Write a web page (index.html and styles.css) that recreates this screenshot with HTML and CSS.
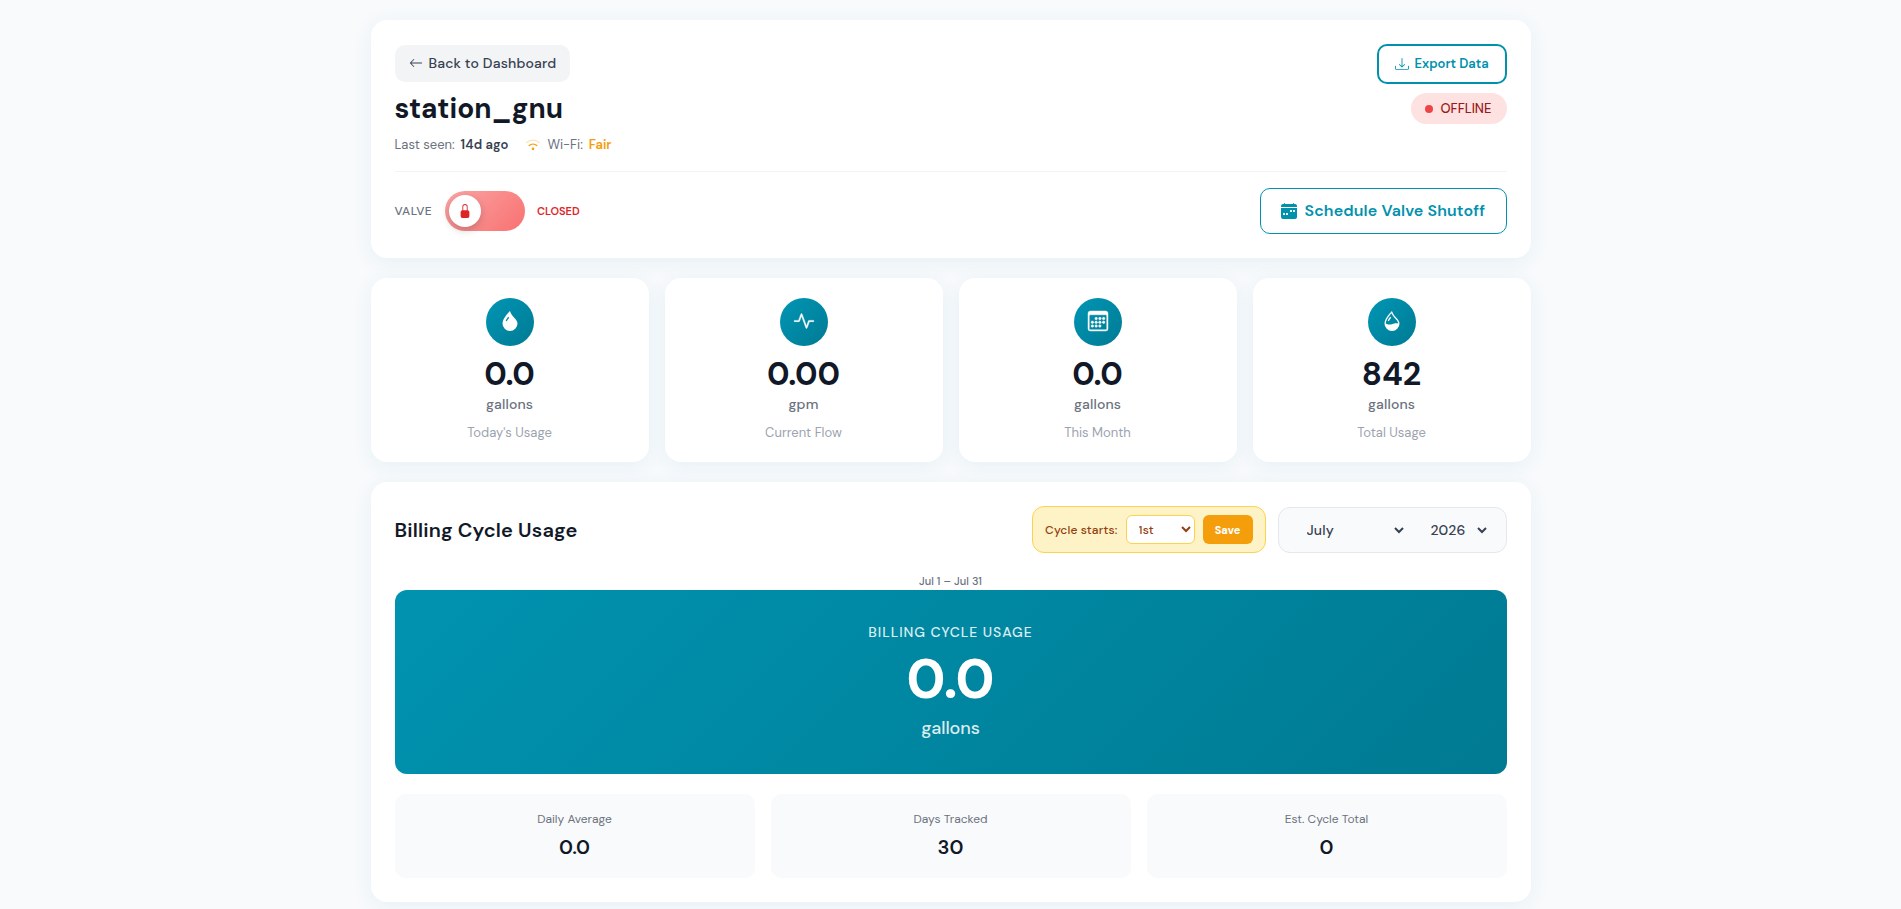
FILE: index.html
```
<!DOCTYPE html>
<html lang="en">
<head>
    <meta charset="UTF-8">
    <meta name="viewport" content="width=device-width, initial-scale=1.0">
    <title>station_gnu</title>
    <link rel="stylesheet" href="styles.css">
</head>
<body>
<div class="container">

    <!-- Station header -->
    <section class="card header-card">
        <div class="header-top">
            <button class="btn-back">
                <svg class="icon" viewBox="0 0 16 16"><path d="M15 8a.5.5 0 0 0-.5-.5H2.707l3.147-3.146a.5.5 0 1 0-.708-.708l-4 4a.5.5 0 0 0 0 .708l4 4a.5.5 0 0 0 .708-.708L2.707 8.5H14.5A.5.5 0 0 0 15 8"/></svg>
                <span>Back to Dashboard</span>
            </button>
            <button class="btn-export">
                <svg class="icon" viewBox="0 0 16 16"><path d="M.5 9.9a.5.5 0 0 1 .5.5v2.5a1 1 0 0 0 1 1h12a1 1 0 0 0 1-1v-2.5a.5.5 0 0 1 1 0v2.5a2 2 0 0 1-2 2H2a2 2 0 0 1-2-2v-2.5a.5.5 0 0 1 .5-.5"/><path d="M7.646 11.854a.5.5 0 0 0 .708 0l3-3a.5.5 0 0 0-.708-.708L8.5 10.293V1.5a.5.5 0 0 0-1 0v8.793L5.354 8.146a.5.5 0 1 0-.708.708z"/></svg>
                <span>Export Data</span>
            </button>
        </div>
        <div class="header-main">
            <div>
                <h1 class="station-name">station_gnu</h1>
                <div class="station-meta">
                    <span class="meta-item">Last seen: <strong class="seen">14d ago</strong></span>
                    <span class="meta-item wifi">
                        <svg class="icon wifi-icon" viewBox="0 0 16 16"><path class="wifi-off" d="M.8 5.4C4.8 1.5 11.2 1.5 15.2 5.4"/><path d="M3.6 8.6c2.5-2.3 6.3-2.3 8.8 0"/><circle cx="8" cy="12.4" r="1.5"/></svg>
                        <span>Wi-Fi:</span> <strong class="fair">Fair</strong>
                    </span>
                </div>
            </div>
            <div class="status-badge"><span class="status-dot"></span>OFFLINE</div>
        </div>
        <div class="valve-row">
            <div class="valve">
                <span class="valve-label">VALVE</span>
                <div class="toggle">
                    <div class="knob">
                        <svg class="icon" viewBox="0 0 16 16"><path d="M8 1a2 2 0 0 1 2 2v4H6V3a2 2 0 0 1 2-2m3 6V3a3 3 0 0 0-6 0v4a2 2 0 0 0-2 2v5a2 2 0 0 0 2 2h6a2 2 0 0 0 2-2V9a2 2 0 0 0-2-2"/></svg>
                    </div>
                </div>
                <span class="valve-state">CLOSED</span>
            </div>
            <button class="btn-schedule">
                <svg class="icon" viewBox="0 0 16 16"><path fill-rule="evenodd" d="M4 .5a.5.5 0 0 0-1 0V1H2a2 2 0 0 0-2 2v1h16V3a2 2 0 0 0-2-2h-1V.5a.5.5 0 0 0-1 0V1H4zM16 14V5H0v9a2 2 0 0 0 2 2h12a2 2 0 0 0 2-2M9.5 7h1a.5.5 0 0 1 .5.5v1a.5.5 0 0 1-.5.5h-1a.5.5 0 0 1-.5-.5v-1a.5.5 0 0 1 .5-.5m3 0h1a.5.5 0 0 1 .5.5v1a.5.5 0 0 1-.5.5h-1a.5.5 0 0 1-.5-.5v-1a.5.5 0 0 1 .5-.5M2 10.5a.5.5 0 0 1 .5-.5h1a.5.5 0 0 1 .5.5v1a.5.5 0 0 1-.5.5h-1a.5.5 0 0 1-.5-.5zm3.5-.5h1a.5.5 0 0 1 .5.5v1a.5.5 0 0 1-.5.5h-1a.5.5 0 0 1-.5-.5v-1a.5.5 0 0 1 .5-.5"/></svg>
                <span>Schedule Valve Shutoff</span>
            </button>
        </div>
    </section>

    <!-- Stats -->
    <section class="stats">
        <div class="card stat">
            <div class="stat-icon">
                <svg class="icon" viewBox="0 0 16 16"><path fill-rule="evenodd" d="M8 16a6 6 0 0 0 6-6c0-1.655-1.122-2.904-2.432-4.362C10.254 4.176 8.75 2.503 8 0c0 0-6 5.686-6 10a6 6 0 0 0 6 6M6.646 4.646l.708.708c-.29.29-1.128 1.311-1.907 2.87l-.894-.448c.82-1.641 1.717-2.753 2.093-3.13"/></svg>
            </div>
            <div class="stat-value">0.0</div>
            <div class="stat-unit">gallons</div>
            <div class="stat-label">Today's Usage</div>
        </div>
        <div class="card stat">
            <div class="stat-icon">
                <svg class="icon bold" viewBox="0 0 16 16"><path d="M6 2a.5.5 0 0 1 .47.33L10 12.036l1.53-4.208A.5.5 0 0 1 12 7.5h3.5a.5.5 0 0 1 0 1h-3.15l-1.88 5.17a.5.5 0 0 1-.94 0L6 3.964 4.47 8.171A.5.5 0 0 1 4 8.5H.5a.5.5 0 0 1 0-1h3.15l1.88-5.17A.5.5 0 0 1 6 2"/></svg>
            </div>
            <div class="stat-value">0.00</div>
            <div class="stat-unit">gpm</div>
            <div class="stat-label">Current Flow</div>
        </div>
        <div class="card stat">
            <div class="stat-icon">
                <svg class="icon bold" viewBox="0 0 16 16"><path fill-rule="evenodd" d="M14 0H2a2 2 0 0 0-2 2v12a2 2 0 0 0 2 2h12a2 2 0 0 0 2-2V2a2 2 0 0 0-2-2M1 3.857C1 3.384 1.448 3 2 3h12c.552 0 1 .384 1 .857v10.286c0 .473-.448.857-1 .857H2c-.552 0-1-.384-1-.857z"/><circle cx="6.5" cy="6" r="1"/><circle cx="9.5" cy="6" r="1"/><circle cx="12.5" cy="6" r="1"/><circle cx="3.5" cy="9" r="1"/><circle cx="6.5" cy="9" r="1"/><circle cx="9.5" cy="9" r="1"/><circle cx="12.5" cy="9" r="1"/><circle cx="3.5" cy="12" r="1"/><circle cx="6.5" cy="12" r="1"/><circle cx="9.5" cy="12" r="1"/></svg>
            </div>
            <div class="stat-value">0.0</div>
            <div class="stat-unit">gallons</div>
            <div class="stat-label">This Month</div>
        </div>
        <div class="card stat">
            <div class="stat-icon">
                <svg class="icon" viewBox="0 0 16 16"><path fill-rule="evenodd" d="M7.21.8C7.69.295 8 0 8 0q.164.544.371 1.038c.812 1.946 2.073 3.35 3.197 4.6C12.878 7.096 14 8.345 14 10a6 6 0 0 1-12 0C2 6.668 5.58 2.517 7.21.8m.413 1.021A31 31 0 0 0 5.794 3.99c-.726.95-1.436 2.008-1.96 3.07C3.304 8.133 3 9.138 3 10c0 0 2.5 1.5 5 .5s5-.5 5-.5c0-1.201-.796-2.157-2.181-3.7l-.03-.032C9.75 5.11 8.5 3.72 7.623 1.82z"/><path d="M4.553 7.776c.82-1.641 1.717-2.753 2.093-3.13l.708.708c-.29.29-1.128 1.311-1.907 2.87z"/></svg>
            </div>
            <div class="stat-value">842</div>
            <div class="stat-unit">gallons</div>
            <div class="stat-label">Total Usage</div>
        </div>
    </section>

    <!-- Billing cycle -->
    <section class="card billing">
        <div class="billing-header">
            <h2 class="billing-title">Billing Cycle Usage</h2>
            <div class="billing-controls">
                <div class="cycle-box">
                    <label class="cycle-label" for="cycle-day">Cycle starts:</label>
                    <select class="cycle-select" id="cycle-day">
                        <option>1st</option>
                        <option>15th</option>
                    </select>
                    <button class="btn-save">Save</button>
                </div>
                <div class="date-box">
                    <select class="date-select month">
                        <option>July</option>
                        <option>August</option>
                    </select>
                    <select class="date-select year">
                        <option>2026</option>
                        <option>2025</option>
                    </select>
                </div>
            </div>
        </div>
        <div class="cycle-range">Jul 1 – Jul 31</div>
        <div class="usage-banner">
            <div class="usage-title">BILLING CYCLE USAGE</div>
            <div class="usage-value">0.0</div>
            <div class="usage-unit">gallons</div>
        </div>
        <div class="summary">
            <div class="summary-item">
                <div class="summary-label">Daily Average</div>
                <div class="summary-value">0.0</div>
            </div>
            <div class="summary-item">
                <div class="summary-label">Days Tracked</div>
                <div class="summary-value">30</div>
            </div>
            <div class="summary-item">
                <div class="summary-label">Est. Cycle Total</div>
                <div class="summary-value">0</div>
            </div>
        </div>
    </section>
</div>
</body>
</html>
```
FILE: styles.css
```
* {
    margin: 0;
    padding: 0;
    box-sizing: border-box;
}

body {
    background: #f8fafc;
    font-family: "DM Sans", Inter, sans-serif;
    color: #111827;
    line-height: 1.5;
    overflow: hidden;
}

button,
select {
    font-family: inherit;
}

.container {
    width: 1160px;
    margin: 0 auto;
    padding: 20px 0;
}

.icon {
    width: 1em;
    height: 1em;
    fill: currentColor;
    flex-shrink: 0;
}

.card {
    background: #fff;
    border-radius: 16px;
    box-shadow: 0 4px 20px rgba(0, 122, 160, 0.08);
}

/* header */
.header-card {
    height: 238px;
    padding: 24px;
    margin-bottom: 20px;
}

.header-top {
    display: flex;
    justify-content: space-between;
    align-items: flex-start;
    height: 40px;
}

.btn-back {
    display: flex;
    align-items: center;
    gap: 6px;
    width: 175px;
    height: 37px;
    margin-top: 1px;
    padding: 0 14px 1px;
    border: none;
    border-radius: 10px;
    background: #f3f4f6;
    color: #374151;
    font-size: 14px;
    font-weight: 500;
    letter-spacing: 0.17px;
    white-space: nowrap;
}

.btn-export {
    display: flex;
    align-items: center;
    gap: 6px;
    width: 130px;
    height: 40px;
    padding: 0 16px 1px;
    border: 2px solid #0091ad;
    border-radius: 10px;
    background: #fff;
    color: #0091ad;
    font-size: 13px;
    font-weight: 600;
    white-space: nowrap;
}

.btn-export .icon {
    width: 14px;
    height: 14px;
}

.header-main {
    display: flex;
    justify-content: space-between;
    align-items: flex-start;
    height: 88px;
    padding-top: 8px;
    border-bottom: 1px solid #f3f4f6;
}

.station-name {
    font-size: 28px;
    font-weight: 700;
    line-height: 34px;
}

.station-meta {
    display: flex;
    gap: 18px;
    margin-top: 9px;
    color: #6b7280;
    font-size: 13px;
    line-height: 20px;
}

.meta-item {
    display: flex;
    align-items: center;
    gap: 6px;
}

.seen {
    color: #374151;
    font-weight: 600;
    letter-spacing: 0.1px;
}

.fair {
    color: #f59e0b;
    font-weight: 600;
}

.wifi-icon {
    width: 14px;
    height: 14px;
    margin-right: 1px;
    color: #f59e0b;
}

.wifi-icon path {
    fill: none;
    stroke: currentColor;
    stroke-width: 1.4;
    stroke-linecap: round;
}

.wifi-icon .wifi-off {
    opacity: 0.3;
}

.status-badge {
    display: flex;
    align-items: center;
    gap: 8px;
    width: 96px;
    height: 31px;
    margin-top: 1px;
    padding-left: 14px;
    border-radius: 20px;
    background: #fee2e2;
    color: #991b1b;
    font-size: 13px;
    font-weight: 500;
}

.status-dot {
    width: 8px;
    height: 8px;
    border-radius: 50%;
    background: #ef4444;
}

.valve-row {
    display: flex;
    justify-content: space-between;
    align-items: center;
    height: 46px;
    margin-top: 16px;
}

.valve {
    display: flex;
    align-items: center;
    gap: 12px;
}

.valve-label {
    width: 38.5px;
    color: #6b7280;
    font-size: 12px;
    font-weight: 500;
    letter-spacing: 0.5px;
}

.toggle {
    width: 80px;
    height: 40px;
    padding: 4px;
    border-radius: 20px;
    background: linear-gradient(135deg, #fca5a5, #f87171);
}

.knob {
    display: flex;
    align-items: center;
    justify-content: center;
    width: 32px;
    height: 32px;
    border-radius: 50%;
    background: #fff;
    box-shadow: 0 3px 8px rgba(0, 0, 0, 0.2);
    color: #dc2626;
    font-size: 14px;
}

.valve-state {
    color: #dc2626;
    font-size: 11px;
    font-weight: 600;
}

.btn-schedule {
    display: flex;
    align-items: center;
    gap: 8px;
    width: 247px;
    height: 46px;
    padding: 0 20px 1px;
    border: 1px solid #0091ad;
    border-radius: 10px;
    background: #fff;
    color: #0091ad;
    font-size: 16px;
    font-weight: 600;
    letter-spacing: 0.14px;
    white-space: nowrap;
}

/* stats */
.stats {
    display: grid;
    grid-template-columns: repeat(4, 1fr);
    gap: 16px;
    margin-bottom: 20px;
}

.stat {
    height: 184px;
    padding: 20px;
    text-align: center;
}

.stat-icon {
    display: flex;
    align-items: center;
    justify-content: center;
    width: 48px;
    height: 48px;
    margin: 0 auto 12px;
    border-radius: 50%;
    background: linear-gradient(135deg, #0096b4, #007a94);
    color: #fff;
    font-size: 20px;
}

.stat-icon .icon {
    margin-bottom: 2px;
    overflow: visible;
}

.stat-icon .bold {
    stroke: currentColor;
    stroke-width: 0.35;
}

.stat-value {
    font-size: 32px;
    font-weight: 700;
    line-height: 32px;
}

.stat-unit {
    margin-top: 4px;
    color: #6b7280;
    font-size: 14px;
    font-weight: 500;
    line-height: 21px;
    letter-spacing: 0.15px;
}

.stat-label {
    margin-top: 8px;
    color: #9ca3af;
    font-size: 13px;
    line-height: 20px;
}

/* billing */
.billing {
    height: 420px;
    padding: 24px;
}

.billing-header {
    display: flex;
    justify-content: space-between;
    align-items: center;
    height: 47px;
}

.billing-title {
    font-size: 20px;
    font-weight: 600;
    letter-spacing: 0.17px;
}

.billing-controls {
    display: flex;
    align-items: center;
    gap: 12px;
}

.cycle-box {
    display: flex;
    align-items: center;
    justify-content: flex-end;
    gap: 8px;
    width: 234px;
    height: 47px;
    padding: 0 12px;
    border: 1px solid #fcd34d;
    border-radius: 12px;
    background: #fef3c7;
}

.cycle-label {
    color: #92400e;
    font-size: 12px;
    font-weight: 500;
    letter-spacing: 0.15px;
    white-space: nowrap;
}

.cycle-select {
    width: 69px;
    height: 29px;
    padding: 0 8px;
    border: 1px solid #fcd34d;
    border-radius: 6px;
    background: #fff;
    color: #92400e;
    font-size: 12px;
    font-weight: 500;
    letter-spacing: 0.2px;
}

.btn-save {
    width: 50px;
    height: 29px;
    border: none;
    border-radius: 6px;
    background: #f59e0b;
    color: #fff;
    font-size: 11px;
    font-weight: 800;
}

.date-box {
    display: flex;
    align-items: center;
    gap: 12px;
    width: 229px;
    height: 46px;
    padding: 0 16px;
    border: 1px solid #e5e7eb;
    border-radius: 12px;
    background: #f9fafb;
}

.date-select {
    height: 30px;
    padding: 0 8px;
    border: none;
    background: transparent;
    color: #374151;
    font-size: 14px;
    font-weight: 500;
    letter-spacing: 0.15px;
}

.month {
    width: 112px;
}

.year {
    width: 71px;
}

.cycle-range {
    margin-top: 20px;
    color: #6b7280;
    font-size: 11px;
    font-weight: 500;
    line-height: 17px;
    letter-spacing: 0.1px;
    text-align: center;
}

.usage-banner {
    height: 184px;
    padding-top: 32px;
    border-radius: 12px;
    background: linear-gradient(135deg, #0093b0, #007a92);
    color: #fff;
    text-align: center;
}

.usage-title {
    font-size: 14px;
    font-weight: 500;
    line-height: 21px;
    letter-spacing: 0.95px;
    opacity: 0.85;
}

.usage-value {
    margin-top: 8px;
    font-size: 56px;
    font-weight: 700;
    line-height: 56px;
}

.usage-unit {
    margin-top: 8px;
    font-size: 18px;
    font-weight: 500;
    line-height: 27px;
    letter-spacing: -0.1px;
    opacity: 0.85;
}

.summary {
    display: grid;
    grid-template-columns: repeat(3, 1fr);
    gap: 16px;
    margin-top: 20px;
}

.summary-item {
    height: 84px;
    padding-top: 16px;
    border-radius: 10px;
    background: #f9fafb;
    text-align: center;
}

.summary-label {
    color: #6b7280;
    font-size: 12px;
    line-height: 18px;
}

.summary-value {
    margin-top: 4px;
    font-size: 20px;
    font-weight: 600;
    line-height: 30px;
}
```
